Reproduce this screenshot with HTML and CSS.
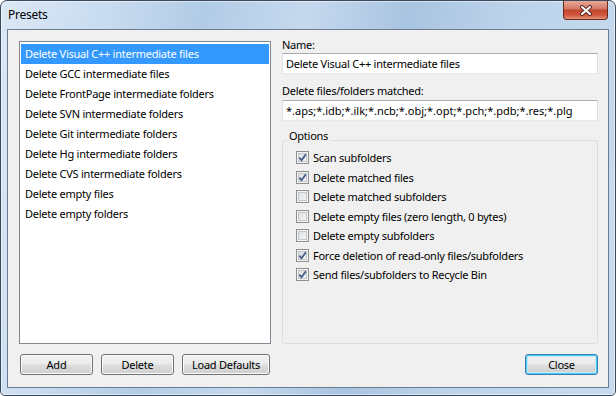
FILE: index.html
```html
<!DOCTYPE html>
<html lang="en">
<head>
  <meta charset="UTF-8">
  <title>Presets</title>
  <link rel="stylesheet" href="styles.css">
</head>
<body>
  <div class="window">
    <div class="titlebar">
      <span class="title">Presets</span>
      <div class="close-x">
        <svg width="14" height="11" viewBox="0 0 14 11">
          <path d="M3 2 L11 9 M11 2 L3 9" stroke="#5a2a22" stroke-width="4" stroke-linecap="round"/>
          <path d="M3 2 L11 9 M11 2 L3 9" stroke="#fff" stroke-width="2" stroke-linecap="round"/>
        </svg>
      </div>
    </div>

    <div class="client">
      <div class="main">
        <ul class="list">
          <li class="selected">Delete Visual C++ intermediate files</li>
          <li>Delete GCC intermediate files</li>
          <li>Delete FrontPage intermediate folders</li>
          <li>Delete SVN intermediate folders</li>
          <li>Delete Git intermediate folders</li>
          <li>Delete Hg intermediate folders</li>
          <li>Delete CVS intermediate folders</li>
          <li>Delete empty files</li>
          <li>Delete empty folders</li>
        </ul>

        <div class="editor">
          <label class="field-label">Name:</label>
          <div class="textbox">Delete Visual C++ intermediate files</div>
          <label class="field-label second">Delete files/folders matched:</label>
          <div class="textbox second">*.aps;*.idb;*.ilk;*.ncb;*.obj;*.opt;*.pch;*.pdb;*.res;*.plg</div>

          <fieldset class="options">
            <legend>Options</legend>
            <div class="checks">
              <div class="check"><span class="box on"><svg width="11" height="11" viewBox="0 0 11 11"><path d="M2.3 5.6 L4.5 8.2 L8.8 2.4" fill="none" stroke="#4a5f8c" stroke-width="1.8"/></svg></span>Scan subfolders</div>
              <div class="check"><span class="box on"><svg width="11" height="11" viewBox="0 0 11 11"><path d="M2.3 5.6 L4.5 8.2 L8.8 2.4" fill="none" stroke="#4a5f8c" stroke-width="1.8"/></svg></span>Delete matched files</div>
              <div class="check"><span class="box"></span>Delete matched subfolders</div>
              <div class="check"><span class="box"></span>Delete empty files (zero length, 0 bytes)</div>
              <div class="check"><span class="box"></span>Delete empty subfolders</div>
              <div class="check"><span class="box on"><svg width="11" height="11" viewBox="0 0 11 11"><path d="M2.3 5.6 L4.5 8.2 L8.8 2.4" fill="none" stroke="#4a5f8c" stroke-width="1.8"/></svg></span>Force deletion of read-only files/subfolders</div>
              <div class="check"><span class="box on"><svg width="11" height="11" viewBox="0 0 11 11"><path d="M2.3 5.6 L4.5 8.2 L8.8 2.4" fill="none" stroke="#4a5f8c" stroke-width="1.8"/></svg></span>Send files/subfolders to Recycle Bin</div>
            </div>
          </fieldset>
        </div>
      </div>

      <div class="buttons">
        <button class="btn">Add</button>
        <button class="btn">Delete</button>
        <button class="btn wide">Load Defaults</button>
        <button class="btn default">Close</button>
      </div>
    </div>
  </div>
</body>
</html>
```

FILE: styles.css
```css
* { margin: 0; padding: 0; box-sizing: border-box; }
body {
  font-family: "Noto Sans", sans-serif;
  font-size: 11px;
  letter-spacing: -0.25px;
  color: #000;
  background: #fff;
}
.window {
  width: 616px;
  height: 396px;
  border: 1px solid #3a4a5c;
  border-radius: 7px 7px 5px 5px;
  background: linear-gradient(100deg, #dbe8f5 0%, #c9dcf0 15%, #b2cce6 30%, #c5d9ee 45%, #a9c4e1 60%, #bcd3ea 75%, #c8dcf0 100%);
  box-shadow: inset 0 0 0 1px rgba(255, 255, 255, 0.5);
  display: flex;
  flex-direction: column;
}
.titlebar {
  height: 28px;
  display: flex;
  justify-content: space-between;
  align-items: flex-start;
  padding-left: 7px;
}
.title {
  line-height: 28px;
  font-size: 12px;
}
.close-x {
  width: 45px;
  height: 19px;
  margin-right: 7px;
  border: 1px solid #6b2a1e;
  border-top: none;
  border-radius: 0 0 4px 4px;
  background: linear-gradient(#e9a99a, #d47662 45%, #c0442c 50%, #d25a42 80%, #e6937c);
  display: flex;
  align-items: center;
  justify-content: center;
}
.client {
  flex: 1;
  margin: 0 6px 7px;
  border: 1px solid #6d7d91;
  background: #f0f0f0;
  padding: 11px 10px 12px 11px;
  display: flex;
  flex-direction: column;
}
.main {
  flex: 1;
  display: flex;
  gap: 11px;
  min-height: 0;
}
.list {
  width: 252px;
  border: 1px solid #828790;
  background: #fff;
  list-style: none;
  padding: 2px 1px;
}
.list li {
  height: 20px;
  line-height: 20px;
  padding-left: 4px;
  white-space: nowrap;
}
.list li.selected {
  background: #3399ff;
  color: #fff;
}
.editor {
  flex: 1;
  display: flex;
  flex-direction: column;
  min-width: 0;
}
.field-label {
  line-height: 12px;
  margin-top: -2px;
}
.field-label.second {
  margin-top: 11px;
}
.textbox {
  height: 21px;
  margin-top: 2px;
  border: 1px solid;
  border-color: #abadb3 #dbdfe6 #e3e9ef #e2e3ea;
  background: #fff;
  padding-left: 3px;
  line-height: 19px;
  white-space: nowrap;
}
.textbox.second {
  margin-top: 3px;
  letter-spacing: 0;
}
.options {
  flex: 1;
  margin-top: 9px;
  border: 1px solid #d5dfe5;
  border-radius: 3px;
  padding: 0 10px 0 13px;
  min-width: 0;
}
.options legend {
  margin-left: -9px;
  padding: 0 2px 8px;
  line-height: 12px;
}
.checks {
  margin-top: -2px;
}
.check {
  display: flex;
  align-items: center;
  height: 19.5px;
  white-space: nowrap;
}
.box {
  width: 13px;
  height: 13px;
  margin-right: 4px;
  border: 1px solid #8e8f8f;
  background: linear-gradient(135deg, #d6d8db, #fbfbfb);
  box-shadow: inset 0 0 0 1px #f4f4f4, inset 0 0 0 2px #c3c7cc;
  display: flex;
  align-items: center;
  justify-content: center;
}
.buttons {
  display: flex;
  gap: 8px;
  margin-top: 10px;
  padding-left: 1px;
}
.btn {
  width: 73px;
  height: 21px;
  font: inherit;
  letter-spacing: inherit;
  color: #000;
  border: 1px solid #707070;
  border-radius: 3px;
  background: linear-gradient(#f2f2f2, #ebebeb 48%, #dddddd 52%, #cfcfcf);
  box-shadow: inset 0 0 0 1px #fcfcfc;
}
.btn.wide {
  width: 88px;
}
.btn.default {
  margin-left: auto;
  border-color: #3c7fb1;
  box-shadow: inset 0 0 0 1px #48c8f0, inset 0 0 0 2px #c4ebfb;
}
```
